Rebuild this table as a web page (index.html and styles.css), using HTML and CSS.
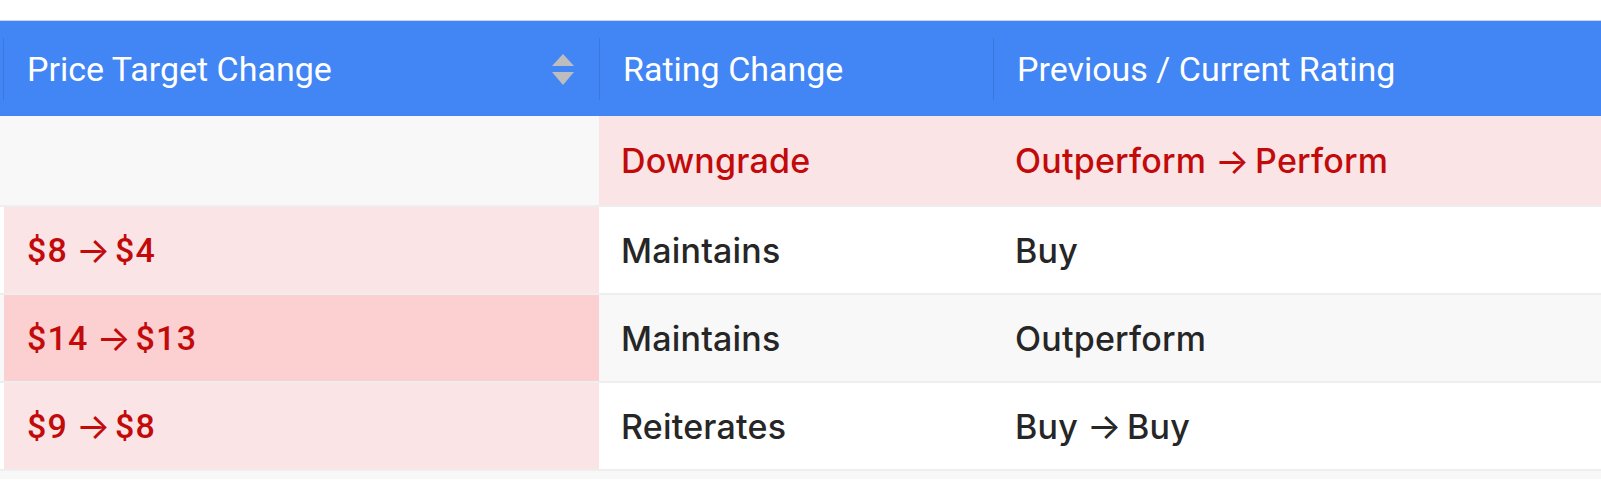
FILE: index.html
```html
<!DOCTYPE html>
<html lang="en">
<head>
<meta charset="utf-8">
<title>Analyst Ratings</title>
<link rel="stylesheet" href="styles.css">
</head>
<body>
<div class="page">
  <div class="table">
    <div class="thead">
      <div class="th th-sort">
        <span>Price Target Change</span>
        <svg class="sort" width="22" height="32" viewBox="0 0 22 32" aria-hidden="true">
          <polygon points="11,0 22,12 0,12" fill="#bdbdbd"/>
          <polygon points="0,18 22,18 11,31" fill="#bdbdbd"/>
        </svg>
      </div>
      <div class="th">Rating Change</div>
      <div class="th">Previous / Current Rating</div>
    </div>

    <div class="tr tr-first odd">
      <div class="td price"></div>
      <div class="td hl neg">Downgrade</div>
      <div class="td hl neg">Outperform<span class="arr">→</span>Perform</div>
    </div>

    <div class="tr">
      <div class="td price hl neg">$8<span class="arr">→</span>$4</div>
      <div class="td">Maintains</div>
      <div class="td">Buy</div>
    </div>

    <div class="tr odd">
      <div class="td price hl-strong neg">$14<span class="arr">→</span>$13</div>
      <div class="td">Maintains</div>
      <div class="td">Outperform</div>
    </div>

    <div class="tr">
      <div class="td price hl neg">$9<span class="arr">→</span>$8</div>
      <div class="td">Reiterates</div>
      <div class="td">Buy<span class="arr">→</span>Buy</div>
    </div>

    <div class="tr odd tr-cut"></div>
  </div>
</div>
</body>
</html>
```

FILE: styles.css
```css
* {
  box-sizing: border-box;
}

html, body {
  margin: 0;
  padding: 0;
  background: #ffffff;
}

body {
  width: 1601px;
  height: 480px;
  overflow: hidden;
}

.page {
  padding-top: 20px;
}

.table {
  display: flex;
  flex-direction: column;
}

.thead {
  display: grid;
  grid-template-columns: 596px 394px 1fr;
  align-items: center;
  height: 96px;
  padding: 17px 0 16px 3px;
  background: #4285f4;
  border-top: 1px solid #c8d8f4;
}

.th {
  display: flex;
  align-items: center;
  height: 62px;
  padding-left: 23px;
  border-left: 1px solid #3a78de;
  color: #ffffff;
  font-family: Roboto, "Liberation Sans", sans-serif;
  font-size: 34px;
  font-weight: 400;
  white-space: nowrap;
}

.th-sort {
  justify-content: space-between;
  padding-right: 25px;
}

.sort {
  display: block;
  margin-top: 2px;
}

.tr {
  display: grid;
  grid-template-columns: 595px 394px 1fr;
  height: 88px;
  padding-left: 4px;
  background: #ffffff;
  border-bottom: 2px solid #eeeeee;
}

.tr-first {
  height: 91px;
}

.tr.odd {
  background: #f8f8f8;
}

.tr-first.odd {
  padding-left: 0;
  grid-template-columns: 599px 394px 1fr;
}

.tr-cut {
  height: 8px;
  border-bottom: 0;
}

.td {
  display: flex;
  align-items: center;
  padding-left: 22px;
  color: #262626;
  font-family: Inter, "Noto Sans", sans-serif;
  font-size: 34px;
  font-weight: 500;
  letter-spacing: 0.2px;
  white-space: nowrap;
}

.td.price {
  padding-left: 23px;
  font-family: Roboto, "Liberation Sans", sans-serif;
  font-size: 34px;
  font-weight: 500;
  letter-spacing: 1.2px;
}

.hl {
  background: #fae4e6;
}

.hl-strong {
  background: #fccfd0;
}

.neg {
  color: #c20a0a;
}

.arr {
  display: inline-block;
  width: 31px;
  margin: 0 9px;
  text-align: center;
  font-family: Inter, "DejaVu Sans", sans-serif;
  font-weight: 400;
  font-size: 36px;
  line-height: 1;
  letter-spacing: 0;
}

.price .arr {
  margin: 0 8px;
}
```
